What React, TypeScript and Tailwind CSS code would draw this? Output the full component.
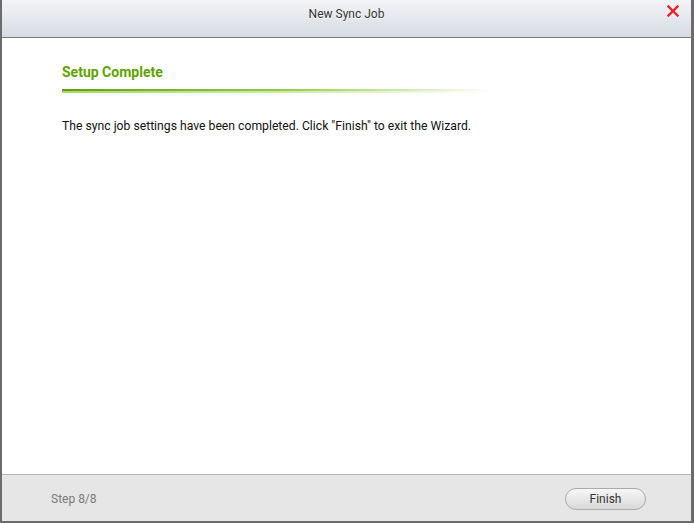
import React from "react";

export default function App() {
  return (
    <div
      className="w-[694px] h-[523px] bg-white flex flex-col border-l-2 border-r-[3px] border-b-2 border-[#6c6c6c] overflow-hidden"
      style={{ fontFamily: "Roboto, 'Liberation Sans', sans-serif" }}
    >
      <div className="h-[38px] shrink-0 relative flex items-center justify-center bg-gradient-to-b from-[#f3f4f7] to-[#d6dbe2] border-b border-[#7a7a7a]">
        <span className="text-[12px] text-[#333] pb-[10px]" style={{ textShadow: "0 1px 0 #fff" }}>New Sync Job</span>
        <svg className="absolute right-[12px] top-[5px]" width="12" height="12" viewBox="0 0 12 12">
          <path d="M1.5 1.5 L10.5 10.5 M10.5 1.5 L1.5 10.5" stroke="#e8242a" strokeWidth="2.4" strokeLinecap="square" />
        </svg>
      </div>
      <div className="flex-1 bg-white pl-[60px] pt-[26px]">
        <div className="text-[14px] font-bold text-[#5ea300] leading-[16px]">Setup Complete</div>
        <div className="mt-[9px] w-[430px] h-[4px] flex flex-col">
          <div className="h-[2px] bg-gradient-to-r from-[#5ea300] via-[#8fcc40] to-transparent" />
          <div className="h-[2px] bg-gradient-to-r from-[#a8d86a] via-[#cdeaa5] to-transparent" />
        </div>
        <div className="mt-[25px] text-[12.2px] text-[#111] leading-[16px]">
          The sync job settings have been completed. Click "Finish" to exit the Wizard.
        </div>
      </div>
      <div className="h-[47px] shrink-0 bg-[#e6e6e6] border-t border-[#b5b5b5] flex items-center justify-between pl-[49px] pr-[45px] pt-[2px]">
        <span className="text-[12px] text-[#7a7a7a]">Step 8/8</span>
        <button className="w-[81px] h-[22px] rounded-full border border-[#aaaaaa] bg-gradient-to-b from-[#f7f7f7] to-[#d9d9d9] text-[12px] text-[#333] flex items-center justify-center">
          Finish
        </button>
      </div>
    </div>
  );
}
